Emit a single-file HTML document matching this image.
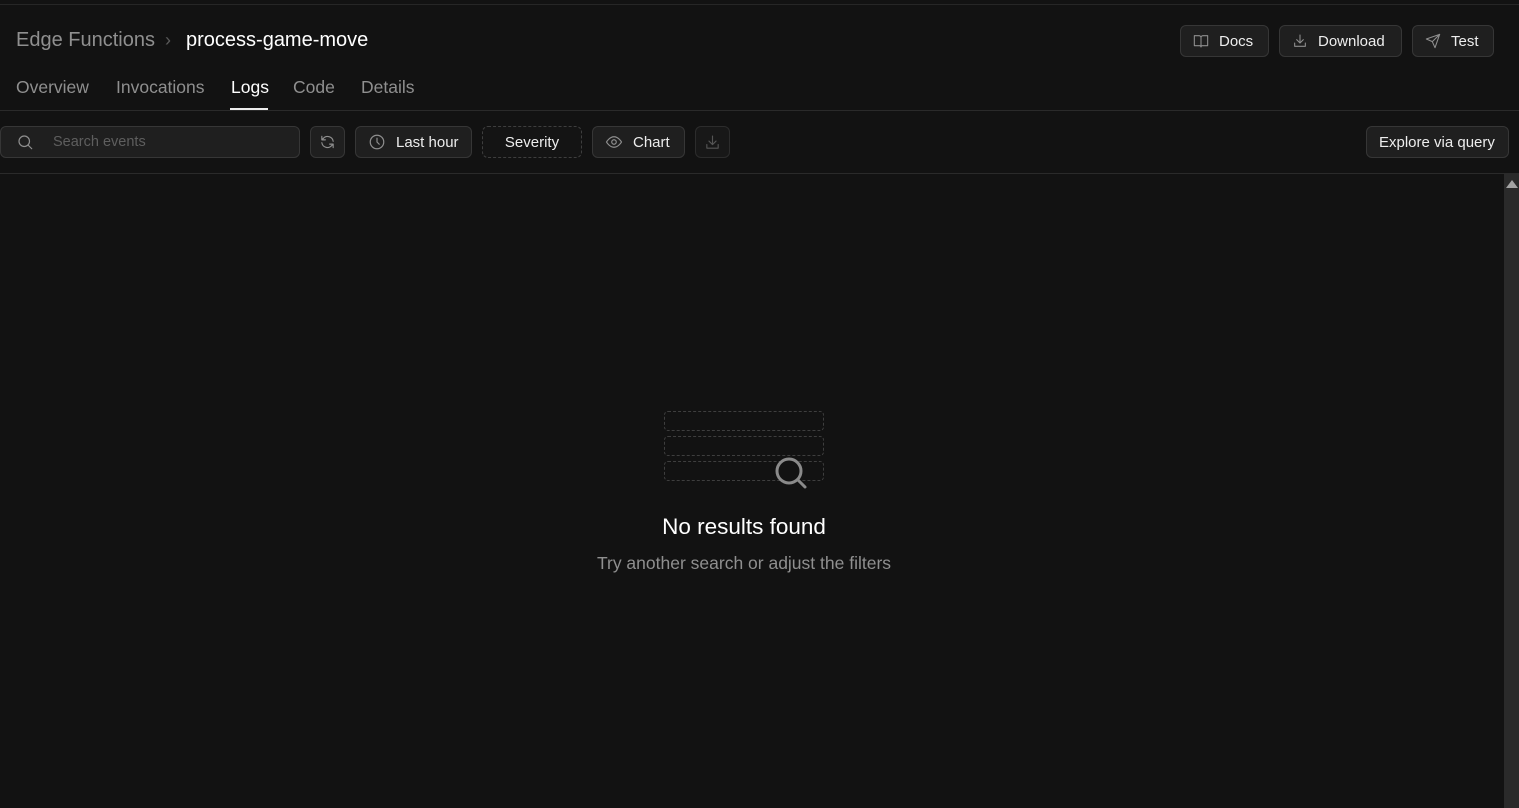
<!DOCTYPE html>
<html><head><meta charset="utf-8"><style>
*{box-sizing:border-box;margin:0;padding:0}
body{width:1519px;height:808px;background:#121212;font-family:"Liberation Sans",sans-serif;color:#ededed;position:relative;overflow:hidden}
.abs{position:absolute}
.btn{position:absolute;height:32px;border:1px solid #363636;background:#1f1f1f;border-radius:6px;display:flex;align-items:center;font-size:15px;color:#ededed;gap:10px;padding:0 12px}
svg{fill:none;stroke:#8f8f8f;stroke-width:1.6;stroke-linecap:round;stroke-linejoin:round}
.tab{position:absolute;top:77px;font-size:17.5px;color:#8f8f8f}
</style></head><body>
<div class="abs" style="left:0;top:4px;width:1519px;height:1px;background:#262626"></div>
<div class="abs" style="left:16px;top:29px;font-size:20px;color:#8f8f8f">Edge Functions</div>
<div class="abs" style="left:165px;top:30px;font-size:18px;color:#5a5a5a">›</div>
<div class="abs" style="left:186px;top:29px;font-size:20px;color:#fff">process-game-move</div>

<div class="btn" style="left:1180px;top:25px;width:89px"><svg width="16" height="16" viewBox="0 0 24 24"><path d="M2 4h7a3 3 0 0 1 3 3v14a2 2 0 0 0-2-2H2zM22 4h-7a3 3 0 0 0-3 3v14a2 2 0 0 1 2-2h8z"/></svg>Docs</div>
<div class="btn" style="left:1279px;top:25px;width:123px"><svg width="16" height="16" viewBox="0 0 24 24"><path d="M4 15v5h16v-5M12 3v12M7 10l5 5 5-5"/></svg>Download</div>
<div class="btn" style="left:1412px;top:25px;width:82px"><svg width="16" height="16" viewBox="0 0 24 24"><path d="M22 2L11 13M22 2l-7 20-4-9-9-4z"/></svg>Test</div>

<div class="tab" style="left:16px">Overview</div>
<div class="tab" style="left:116px">Invocations</div>
<div class="tab" style="left:231px;color:#fff">Logs</div>
<div class="abs" style="left:230px;top:108px;width:38px;height:2px;background:#ededed"></div>
<div class="tab" style="left:293px">Code</div>
<div class="tab" style="left:361px">Details</div>
<div class="abs" style="left:0;top:110px;width:1519px;height:1px;background:#2a2a2a"></div>

<div class="btn" style="left:0;top:126px;width:300px;height:32px;padding-left:15px;gap:19px;color:#5e5e5e;font-size:14.5px"><svg width="18" height="18" viewBox="0 0 24 24"><circle cx="11" cy="11" r="7"/><path d="M21 21l-5-5"/></svg>Search events</div>
<div class="btn" style="left:310px;top:126px;width:35px;padding:0 8px"><svg width="18" height="18" viewBox="0 0 24 24"><path d="M20 11a8 8 0 0 0-14-4l-2 2M4 4v5h5M4 13a8 8 0 0 0 14 4l2-2M20 20v-5h-5"/></svg></div>
<div class="btn" style="left:355px;top:126px;width:117px"><svg width="18" height="18" viewBox="0 0 24 24"><circle cx="12" cy="12" r="9"/><path d="M12 7v5l3 3"/></svg>Last hour</div>
<div class="btn" style="left:482px;top:126px;width:100px;background:#141414;border:1px dashed #3e3e3e;justify-content:center">Severity</div>
<div class="btn" style="left:592px;top:126px;width:93px"><svg width="18" height="18" viewBox="0 0 24 24"><path d="M2 12s4-7 10-7 10 7 10 7-4 7-10 7S2 12 2 12z"/><circle cx="12" cy="12" r="3"/></svg>Chart</div>
<div class="btn" style="left:695px;top:126px;width:35px;padding:0 8px;background:#181818;border-color:#2c2c2c"><svg width="17" height="17" viewBox="0 0 24 24" style="stroke:#555"><path d="M4 15v5h16v-5M12 3v12M7 10l5 5 5-5"/></svg></div>
<div class="btn" style="left:1366px;top:126px;width:143px">Explore via query</div>
<div class="abs" style="left:0;top:173px;width:1519px;height:1px;background:#2a2a2a"></div>

<div class="abs" style="left:1504px;top:174px;width:15px;height:634px;background:#2a2a2a"></div>
<div class="abs" style="left:1506px;top:180px;width:0;height:0;border-left:6px solid transparent;border-right:6px solid transparent;border-bottom:8px solid #a3a3a3"></div>

<div class="abs" style="left:664px;top:411px;width:160px;height:20px;border:1px dashed #3e3e3e;border-radius:4px"></div>
<div class="abs" style="left:664px;top:436px;width:160px;height:20px;border:1px dashed #3e3e3e;border-radius:4px"></div>
<div class="abs" style="left:664px;top:461px;width:160px;height:20px;border:1px dashed #3e3e3e;border-radius:4px"></div>
<svg class="abs" style="left:772px;top:455px;stroke:#8a8a8a;stroke-width:3" width="36" height="36" viewBox="0 0 36 36"><circle cx="17" cy="16" r="12" fill="#121212"/><path d="M26 25l7 7"/></svg>
<div class="abs" style="left:0;width:1488px;top:514px;text-align:center;font-size:22.5px;color:#fff">No results found</div>
<div class="abs" style="left:0;width:1488px;top:553px;text-align:center;font-size:17.5px;color:#8f8f8f">Try another search or adjust the filters</div>
</body></html>
